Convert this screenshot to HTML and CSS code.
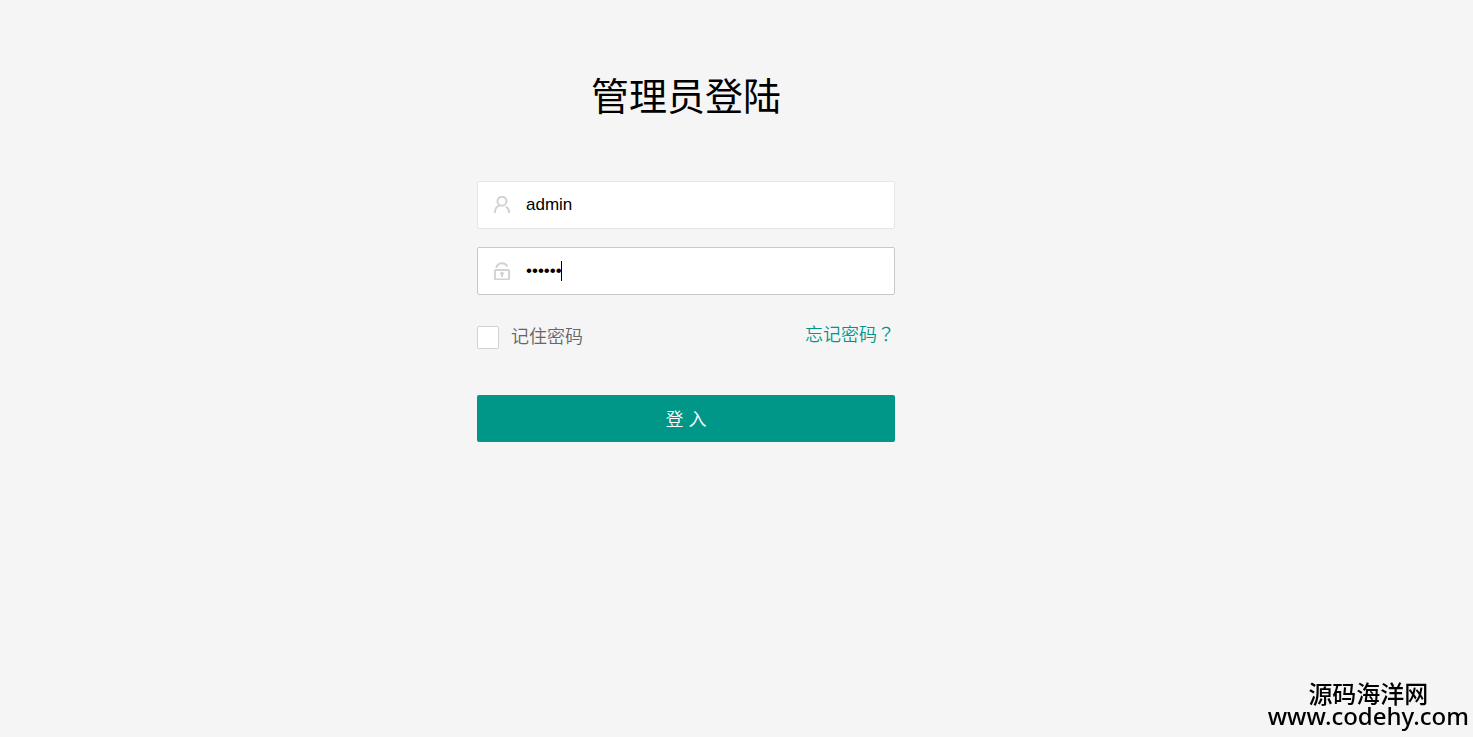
FILE: index.html
```html
<!DOCTYPE html>
<html lang="zh-CN">
<head>
<meta charset="utf-8">
<meta name="viewport" content="width=device-width, initial-scale=1">
<title>管理员登陆</title>
<link rel="stylesheet" href="styles.css">
</head>
<body>
<main class="login">
  <h1 class="login-title">管理员登陆</h1>
  <form class="login-form">
    <div class="field">
      <label class="field-icon" for="username" aria-label="用户名">
        <svg viewBox="0 0 18 18" width="18" height="18"><circle cx="9" cy="5.2" r="4.5"/><path d="M1.9 17C1.9 13.2 3.6 10.4 6.6 9.4M12.8 10.6C15 11.8 16.1 14.2 16.1 17"/></svg>
      </label>
      <input class="field-input" id="username" type="text" value="admin">
    </div>
    <div class="field field-active">
      <label class="field-icon" for="password" aria-label="密码">
        <svg viewBox="0 0 18 18" width="18" height="18"><rect x="1.9" y="8" width="14.2" height="9.4" rx="1"/><path d="M3.2 5.8C4.8 .2 12 -.4 14.4 4.6M9 12V15"/><circle class="keyhole" cx="9" cy="11.6" r="1.8"/></svg>
      </label>
      <input class="field-input" id="password" type="password" value="123456">
      <span class="caret"></span>
    </div>
    <div class="options">
      <label class="remember" for="remember"><input class="remember-box" id="remember" type="checkbox">记住密码</label>
      <a class="forgot" href="#">忘记密码<span class="question" lang="zh-TW">？</span></a>
    </div>
    <button class="submit" type="submit">登 入</button>
  </form>
</main>
<footer class="site-mark"><span>源码海洋网</span><span class="site-url">www.codehy.com</span></footer>
</body>
</html>
```
FILE: styles.css
```css
* { box-sizing: border-box; }

body {
  margin: 0;
  min-height: 100vh;
  background: #f5f5f5;
  color: #000;
  font-family: "Liberation Sans", "Noto Sans CJK SC", sans-serif;
}

.login {
  padding: 69px 101px 0 0;
}

.login-title {
  margin: 0 0 56px;
  font-size: 38px;
  line-height: 56px;
  font-weight: 400;
  text-align: center;
}

.login-form {
  width: 100%;
  max-width: 418px;
  margin: 0 auto;
}

.field {
  position: relative;
  display: flex;
  align-items: center;
  height: 48px;
  margin-bottom: 18px;
  background: #fff;
  border: 1px solid #e6e6e6;
  border-radius: 2px;
}

.field-active { border-color: #c9c9c9; }

.field-icon {
  display: flex;
  width: 48px;
  padding-left: 15px;
}

.field-icon svg {
  fill: none;
  stroke: #d2d2d2;
  stroke-width: 2;
}

.field-icon .keyhole {
  fill: #d2d2d2;
  stroke: none;
}

.field-input {
  flex: 1;
  min-width: 0;
  height: 44px;
  padding: 0;
  border: 0;
  outline: 0;
  background: transparent;
  color: #000;
  font: 17px "Liberation Sans", sans-serif;
}

.caret {
  position: absolute;
  left: 83px;
  top: 13px;
  width: 1px;
  height: 20px;
  background: #000;
}

.options {
  display: flex;
  justify-content: space-between;
  align-items: flex-start;
  height: 82px;
  font-size: 18px;
  line-height: 24px;
  font-weight: 350;
}

.remember {
  display: flex;
  align-items: center;
  gap: 12px;
  padding-top: 12px;
  color: #666;
}

.remember-box {
  appearance: none;
  width: 22px;
  height: 23px;
  margin: 0;
  background: #fff;
  border: 1px solid #d2d2d2;
  border-radius: 2px;
}

.forgot {
  padding-top: 10px;
  color: #009688;
  text-decoration: none;
}

.question { font-family: "Noto Sans CJK TC", sans-serif; line-height: 1; }

.submit {
  display: block;
  width: 100%;
  height: 47px;
  padding: 0 0 2px;
  border: 0;
  border-radius: 2px;
  background: #009688;
  color: #fff;
  font: 350 18px "Liberation Sans", "Noto Sans CJK SC", sans-serif;
}

.site-mark {
  position: fixed;
  right: 4px;
  bottom: 10px;
  display: flex;
  flex-direction: column;
  align-items: center;
  font: 500 24px/22px "Noto Sans", "Noto Sans CJK SC", sans-serif;
}
```
